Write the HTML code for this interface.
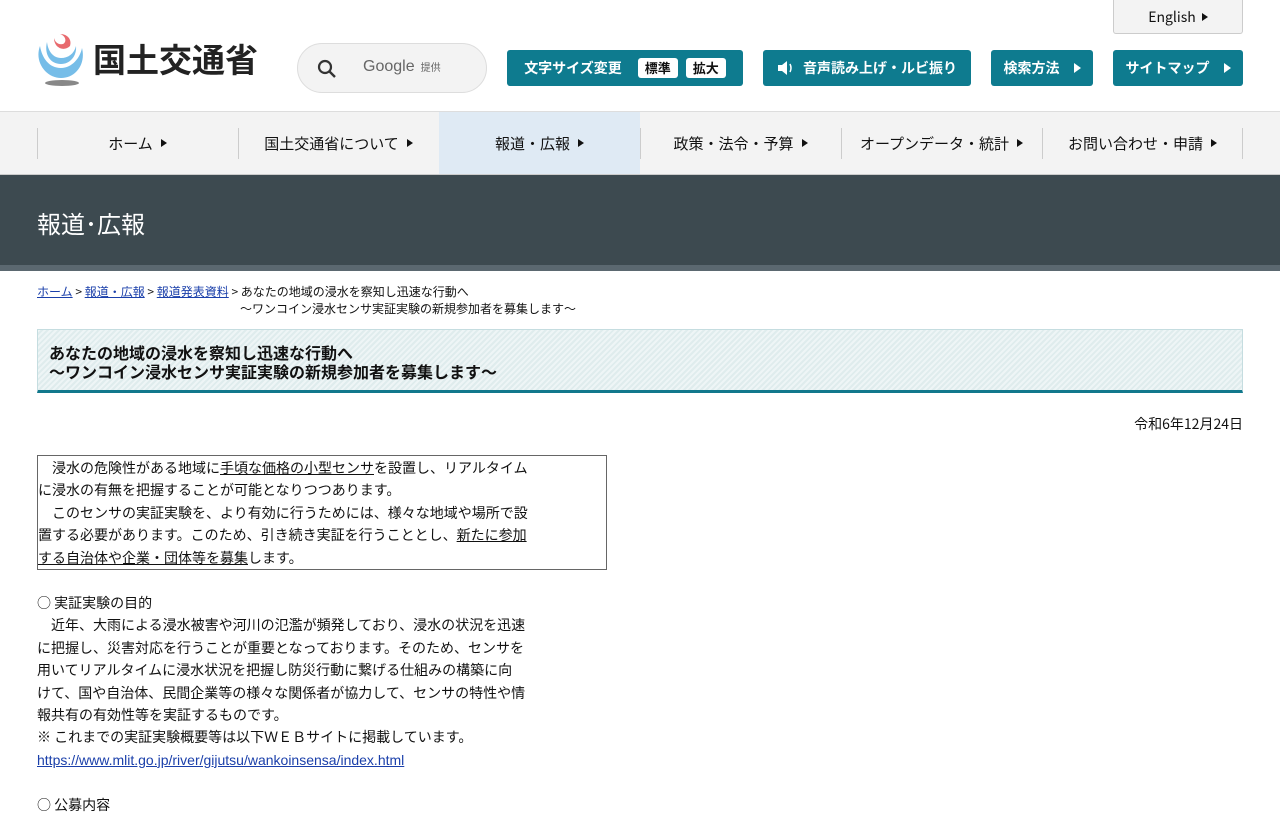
<!DOCTYPE html>
<html lang="ja"><head><meta charset="utf-8">
<style>
*{margin:0;padding:0;box-sizing:border-box}
body{width:1280px;height:800px;overflow:hidden;background:#fff;font-family:"Liberation Sans","Noto Sans CJK JP",sans-serif;color:#111}
.hdr{position:relative;height:112px;border-bottom:1px solid #ddd}
.logo{position:absolute;left:36px;top:32px}
.logotxt{position:absolute;left:93px;top:34px;font-size:33px;font-weight:700;color:#222;letter-spacing:0px;font-family:"Noto Sans CJK JP",sans-serif}
.search{position:absolute;left:297px;top:43px;width:190px;height:50px;border:1px solid #ddd;border-radius:25px;background:#f3f3f3}
.search .g{position:absolute;left:65px;top:14px;font-size:16px;color:#666}
.search .g small{font-size:10px;margin-left:6px;font-family:"Noto Sans CJK JP",sans-serif}
.btn{position:absolute;top:50px;height:36px;background:#0e7b8f;color:#fff;border-radius:3px;font-size:14px;font-weight:700;font-family:"Noto Sans CJK JP",sans-serif;display:flex;align-items:center;justify-content:center;gap:8px}
.tri{display:inline-block;width:0;height:0;border-left:7px solid currentColor;border-top:5px solid transparent;border-bottom:5px solid transparent;margin-left:6px}
.wb{background:#fff;color:#111;border-radius:3px;padding:1px 7px;font-size:13px;line-height:18px}
.eng{position:absolute;left:1113px;top:0;width:130px;height:34px;background:#f3f3f3;border:1px solid #ccc;border-top:none;border-radius:0 0 3px 3px;font-size:14px;display:flex;align-items:center;justify-content:center;font-family:"Noto Sans CJK JP",sans-serif}
.nav{height:63px;background:#f3f3f3;display:flex;padding-left:37px;border-bottom:1px solid #ccc}
.nav div{width:201px;height:62px;display:flex;align-items:center;justify-content:center;font-size:15px;font-family:"Noto Sans CJK JP",sans-serif;position:relative}
.nav div:before{content:"";position:absolute;left:0;top:16px;height:31px;border-left:1px solid #ccc}
.nav div:last-child:after{content:"";position:absolute;right:0;top:16px;height:31px;border-left:1px solid #ccc}
.nav .on{background:#dfeaf4}
.nav .on:before{display:none}
.nav .tri{border-left-width:6px;border-top-width:4px;border-bottom-width:4px;margin-left:8px}
.ban{background:#3d4a50;color:#fff;font-size:24px;padding:30px 0 0 37px;font-family:"Noto Sans CJK JP",sans-serif;border-bottom:6px solid #5b6870;height:96px}
.bc{font-size:12px;padding:12px 37px 0;line-height:17px;font-family:"Noto Sans CJK JP",sans-serif}
.bc a{color:#1a3faa}
.ttl{margin:12px 37px 0;height:64px;border:1px solid #c5dde0;border-bottom:3px solid #11788c;background:repeating-linear-gradient(135deg,#eef5f6 0 2px,#dfeced 2px 4px);padding:13px 0 0 11px;font-size:16px;font-weight:700;line-height:19px;font-family:"Noto Sans CJK JP",sans-serif}
.date{text-align:right;padding:21px 37px 0;font-size:14px;font-family:"Noto Sans CJK JP",sans-serif}
.box{margin:21px 0 0 37px;width:570px;border:1px solid #666;padding:1px 0 0 0;font-size:14px;line-height:22.4px;font-family:"Noto Sans CJK JP",sans-serif}
.box p{width:492px}
.body p{width:490px}
u{text-decoration:underline}
.body{margin:22px 0 0 37px;font-size:14px;line-height:22.4px;font-family:"Noto Sans CJK JP",sans-serif}
.body a{color:#1a3faa;font-family:"Liberation Sans",sans-serif}
</style></head><body>
<div class="hdr">
<svg class="logo" width="50" height="55" viewBox="0 0 50 55">
<path d="M4 14 C-2 30 10 46 25 46 C40 46 50 32 46 16 C44 26 36 36 25 36 C13 36 6 26 4 14Z" fill="#76bde8"/>
<path d="M11 10 C8 22 14 32 25 32 C34 32 41 24 40 14 C38 22 32 26 25 26 C17 26 12 19 11 10Z" fill="#76bde8"/>
<path d="M18 6 C18 16 28 20 34 14 C36 8 32 2 24 2 C30 4 31 10 27 12 C22 13 19 10 18 6Z" fill="#e86a6e"/>
<ellipse cx="26" cy="51" rx="17" ry="3" fill="#888"/>
</svg>
<div class="logotxt">国土交通省</div>
<div class="search"><svg style="position:absolute;left:19px;top:15px" width="20" height="20" viewBox="0 0 20 20"><circle cx="8" cy="8" r="6" fill="none" stroke="#333" stroke-width="2.2"/><path d="M12.5 12.5L18 18" stroke="#333" stroke-width="2.4"/></svg><span class="g">Google<small>提供</small></span></div>
<div class="btn" style="left:507px;width:236px">文字サイズ変更 <span class="wb" style="margin-left:8px">標準</span><span class="wb">拡大</span></div>
<div class="btn" style="left:763px;width:208px"><svg width="18" height="16" viewBox="0 0 18 16"><path d="M1 5h4l5-4v14l-5-4H1z" fill="#fff"/><path d="M13 4q2 4 0 8" stroke="#fff" fill="none" stroke-width="1.5"/></svg>音声読み上げ・ルビ振り</div>
<div class="btn" style="left:991px;width:102px">検索方法<span class="tri"></span></div>
<div class="btn" style="left:1113px;width:130px">サイトマップ<span class="tri"></span></div>
<div class="eng">English<span class="tri" style="border-left-width:6px;border-top-width:4px;border-bottom-width:4px"></span></div>
</div>
<div class="nav">
<div>ホーム<span class="tri"></span></div>
<div>国土交通省について<span class="tri"></span></div>
<div class="on">報道・広報<span class="tri"></span></div>
<div>政策・法令・予算<span class="tri"></span></div>
<div>オープンデータ・統計<span class="tri"></span></div>
<div>お問い合わせ・申請<span class="tri"></span></div>
</div>
<div class="ban">報道･広報</div>
<div class="bc"><a href="#">ホーム</a> &gt; <a href="#">報道・広報</a> &gt; <a href="#">報道発表資料</a> &gt; あなたの地域の浸水を察知し迅速な行動へ<br><span style="padding-left:203px">～ワンコイン浸水センサ実証実験の新規参加者を募集します～</span></div>
<div class="ttl">あなたの地域の浸水を察知し迅速な行動へ<br>～ワンコイン浸水センサ実証実験の新規参加者を募集します～</div>
<div class="date">令和6年12月24日</div>
<div class="box"><p>　浸水の危険性がある地域に<u>手頃な価格の小型センサ</u>を設置し、リアルタイムに浸水の有無を把握することが可能となりつつあります。</p><p>　このセンサの実証実験を、より有効に行うためには、様々な地域や場所で設置する必要があります。このため、引き続き実証を行うこととし、<u>新たに参加する自治体や企業・団体等を募集</u>します。</p></div>
<div class="body"><p>○ 実証実験の目的</p><p>　近年、大雨による浸水被害や河川の氾濫が頻発しており、浸水の状況を迅速に把握し、災害対応を行うことが重要となっております。そのため、センサを<br>用いてリアルタイムに浸水状況を把握し防災行動に繋げる仕組みの構築に向<br>けて、国や自治体、民間企業等の様々な関係者が協力して、センサの特性や情報共有の有効性等を実証するものです。</p><p>※ これまでの実証実験概要等は以下ＷＥＢサイトに掲載しています。</p><p><a href="#">https://www.mlit.go.jp/river/gijutsu/wankoinsensa/index.html</a></p><p>&nbsp;</p><p>○ 公募内容</p></div>
</body></html>
